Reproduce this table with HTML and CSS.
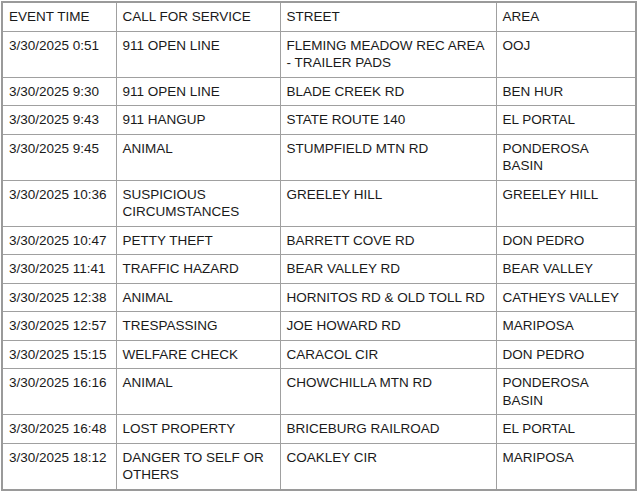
FILE: index.html
```html
<!DOCTYPE html>
<html>
<head>
<meta charset="utf-8">
<link rel="stylesheet" href="styles.css">
</head>
<body>
<table class="calls">
<colgroup>
<col class="c-time"><col class="c-call"><col class="c-street"><col class="c-area">
</colgroup>
<tr><td>EVENT TIME</td><td>CALL FOR SERVICE</td><td>STREET</td><td>AREA</td></tr>
<tr><td>3/30/2025 0:51</td><td>911 OPEN LINE</td><td>FLEMING MEADOW REC AREA - TRAILER PADS</td><td>OOJ</td></tr>
<tr><td>3/30/2025 9:30</td><td>911 OPEN LINE</td><td>BLADE CREEK RD</td><td>BEN HUR</td></tr>
<tr><td>3/30/2025 9:43</td><td>911 HANGUP</td><td>STATE ROUTE 140</td><td>EL PORTAL</td></tr>
<tr><td>3/30/2025 9:45</td><td>ANIMAL</td><td>STUMPFIELD MTN RD</td><td>PONDEROSA BASIN</td></tr>
<tr><td>3/30/2025 10:36</td><td>SUSPICIOUS CIRCUMSTANCES</td><td>GREELEY HILL</td><td>GREELEY HILL</td></tr>
<tr><td>3/30/2025 10:47</td><td>PETTY THEFT</td><td>BARRETT COVE RD</td><td>DON PEDRO</td></tr>
<tr><td>3/30/2025 11:41</td><td>TRAFFIC HAZARD</td><td>BEAR VALLEY RD</td><td>BEAR VALLEY</td></tr>
<tr><td>3/30/2025 12:38</td><td>ANIMAL</td><td>HORNITOS RD &amp; OLD TOLL RD</td><td>CATHEYS VALLEY</td></tr>
<tr><td>3/30/2025 12:57</td><td>TRESPASSING</td><td>JOE HOWARD RD</td><td>MARIPOSA</td></tr>
<tr><td>3/30/2025 15:15</td><td>WELFARE CHECK</td><td>CARACOL CIR</td><td>DON PEDRO</td></tr>
<tr><td>3/30/2025 16:16</td><td>ANIMAL</td><td>CHOWCHILLA MTN RD</td><td>PONDEROSA BASIN</td></tr>
<tr><td>3/30/2025 16:48</td><td>LOST PROPERTY</td><td>BRICEBURG RAILROAD</td><td>EL PORTAL</td></tr>
<tr><td>3/30/2025 18:12</td><td>DANGER TO SELF OR OTHERS</td><td>COAKLEY CIR</td><td>MARIPOSA</td></tr>
</table>
</body>
</html>
```
FILE: styles.css
```css
html, body {
  margin: 0;
  padding: 0;
  background: #ffffff;
}
body {
  padding: 1px 0 0 1px;
}
.calls {
  border-collapse: collapse;
  table-layout: fixed;
  width: 636px;
  border: 2px solid #9a9a9a;
  font-family: "Liberation Sans", Arial, sans-serif;
  font-size: 13.5px;
  line-height: 17.5px;
  color: #1a1a1a;
}
.c-time { width: 114px; }
.c-call { width: 164px; }
.c-street { width: 216px; }
.c-area { width: 140px; }
.calls td {
  border: 1px solid #a0a0a0;
  padding: 5px 3px 5px 6px;
  vertical-align: top;
  text-align: left;
}
.calls td:nth-child(3) {
  padding-right: 9px;
}
```
